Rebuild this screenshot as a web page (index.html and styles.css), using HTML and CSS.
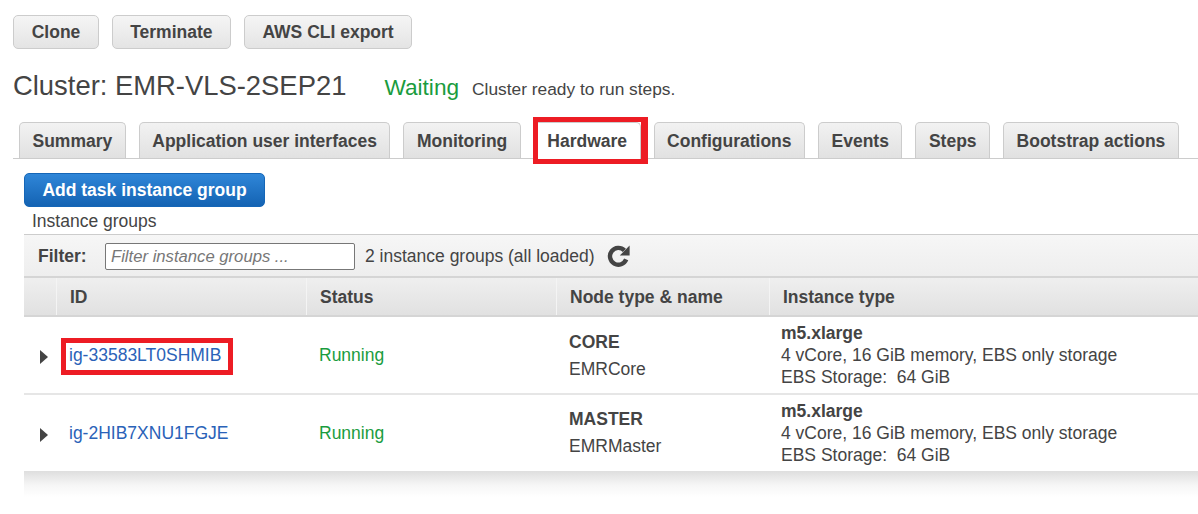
FILE: index.html
```html
<!DOCTYPE html>
<html lang="en">
<head>
<meta charset="utf-8">
<title>Cluster: EMR-VLS-2SEP21</title>
<link rel="stylesheet" href="styles.css">
</head>
<body>
<div class="actions">
  <button class="btn">Clone</button>
  <button class="btn">Terminate</button>
  <button class="btn">AWS CLI export</button>
</div>
<div class="title-row">
  <h1 class="title">Cluster: EMR-VLS-2SEP21</h1>
  <span class="state">Waiting</span>
  <span class="state-note">Cluster ready to run steps.</span>
</div>
<div class="tabs">
  <a class="tab">Summary</a>
  <a class="tab">Application user interfaces</a>
  <a class="tab">Monitoring</a>
  <a class="tab tab-active">Hardware<span class="mark mark-tab"></span></a>
  <a class="tab">Configurations</a>
  <a class="tab">Events</a>
  <a class="tab">Steps</a>
  <a class="tab">Bootstrap actions</a>
</div>
<div class="content">
  <button class="btn-primary">Add task instance group</button>
  <div class="section-label">Instance groups</div>
  <div class="panel">
    <div class="filter-bar">
      <label class="filter-label">Filter:</label>
      <input class="filter-input" type="text" placeholder="Filter instance groups ...">
      <span class="filter-count">2 instance groups (all loaded)</span>
      <svg class="refresh" viewBox="0 0 24 24" width="24" height="24" aria-hidden="true">
        <path d="M19.2 15.4A8.4 8.4 0 1 1 17.4 6.4" fill="none" stroke="#444" stroke-width="4.4"/>
        <path d="M22.6 1.6V11.4h-9.8z" fill="#444"/>
      </svg>
    </div>
    <div class="grid header">
      <div class="cell-head"></div>
      <div class="cell-head">ID</div>
      <div class="cell-head">Status</div>
      <div class="cell-head">Node type &amp; name</div>
      <div class="cell-head">Instance type</div>
    </div>
    <div class="grid row">
      <div class="cell-exp"><span class="arrow"></span></div>
      <div class="cell-id"><a class="link">ig-33583LT0SHMIB<span class="mark mark-id"></span></a></div>
      <div class="cell-status">Running</div>
      <div class="cell-node"><strong>CORE</strong><span>EMRCore</span></div>
      <div class="cell-type"><strong>m5.xlarge</strong><span>4 vCore, 16 GiB memory, EBS only storage</span><span>EBS Storage:&nbsp;&nbsp;64 GiB</span></div>
    </div>
    <div class="grid row row-last">
      <div class="cell-exp"><span class="arrow"></span></div>
      <div class="cell-id"><a class="link">ig-2HIB7XNU1FGJE</a></div>
      <div class="cell-status">Running</div>
      <div class="cell-node"><strong>MASTER</strong><span>EMRMaster</span></div>
      <div class="cell-type"><strong>m5.xlarge</strong><span>4 vCore, 16 GiB memory, EBS only storage</span><span>EBS Storage:&nbsp;&nbsp;64 GiB</span></div>
    </div>
  </div>
  <div class="panel-shadow"></div>
</div>
</body>
</html>
```

FILE: styles.css
```css
* { box-sizing: border-box; }
html, body { margin: 0; padding: 0; }
body {
  width: 1198px;
  height: 514px;
  overflow: hidden;
  background: #fff;
  color: #444;
  font: 17.5px/20px "Liberation Sans", Arial, sans-serif;
}
.actions { display: flex; gap: 12.5px; padding: 15px 0 0 13px; }
.btn {
  height: 34px;
  padding: 0 17.7px;
  border: 1px solid #ccc;
  border-radius: 5px;
  background: linear-gradient(#f5f5f5, #e4e4e4);
  color: #444;
  font: bold 17.5px/20px "Liberation Sans", Arial, sans-serif;
}
.title-row { display: flex; align-items: baseline; padding: 20px 0 0 13px; height: 73px; }
.title { margin: 0; font-size: 27.4px; font-weight: normal; line-height: 34px; }
.state { margin-left: 38px; font-size: 22.67px; color: #1a9c3e; }
.state-note { margin-left: 13px; font-size: 17.33px; }
.tabs {
  display: flex;
  gap: 13px;
  height: 37px;
  margin-left: 13px;
  padding-left: 6px;
  border-bottom: 1px solid #ccc;
}
.tab {
  position: relative;
  height: 36px;
  padding: 8px 12.5px 0;
  border: 1px solid #ccc;
  border-bottom: 0;
  border-radius: 5px 5px 0 0;
  background: linear-gradient(#f2f2f2, #e1e1e1);
  font-weight: bold;
  white-space: nowrap;
}
.tab-active { background: #fff; height: 37px; }
.mark { position: absolute; border: 5px solid #ed1c24; pointer-events: none; }
.mark-tab { left: -2px; right: -8px; top: -6px; height: 47px; border-right-width: 7px; }
.content { padding: 14px 0 0 24px; }
.btn-primary {
  display: block;
  width: 241px;
  height: 34px;
  padding: 0;
  border: 1px solid #1566b7;
  border-radius: 5px;
  background: linear-gradient(#2f86d8, #1463b3);
  color: #fff;
  font: bold 17.5px/20px "Liberation Sans", Arial, sans-serif;
}
.section-label { padding: 4px 0 0 8px; height: 27px; line-height: 20px; }
.filter-bar {
  display: flex;
  align-items: center;
  height: 44px;
  padding: 0 0 0 14px;
  border-top: 1px solid #ccc;
  border-bottom: 2px solid #d5d5d5;
  background: linear-gradient(#f6f6f6, #eee);
}
.filter-label { font-weight: bold; width: 67px; }
.filter-input {
  width: 250px;
  height: 27px;
  margin-top: 2px;
  padding: 0 5px;
  border: 1px solid #777;
  border-radius: 2px;
  background: #fff;
  font: italic 16.67px "Liberation Sans", Arial, sans-serif;
}
.filter-input::placeholder { color: #777; opacity: 1; }
.filter-count { margin-left: 10px; }
.refresh { margin-left: 12px; }
.grid { display: grid; grid-template-columns: 32px 250px 250px 213px 1fr; }
.header { height: 39px; border-bottom: 2px solid #d5d5d5; background: linear-gradient(#efefef, #e1e1e1); }
.cell-head {
  padding: 9px 0 0 13px;
  font-weight: bold;
  border-left: 1px solid #f4f4f4;
}
.cell-head:first-child { border-left: 0; }
.row { height: 78px; background: #fff; border-bottom: 2px solid #e6e6e6; }
.row-last { height: 76px; border-bottom: 0; }
.cell-exp { display: flex; align-items: center; padding: 3px 0 0 16px; }
.arrow { width: 0; height: 0; border-style: solid; border-width: 7px 0 7px 8px; border-color: transparent transparent transparent #444; }
.cell-id, .cell-status { display: flex; align-items: center; padding-left: 13px; }
.link { position: relative; color: #2a62b8; }
.mark-id { left: -8px; top: -7px; width: 172px; height: 37px; }
.cell-status { color: #1a9c3e; }
.cell-node { display: flex; flex-direction: column; gap: 7px; padding: 15px 0 0 13px; }
.row-last .cell-node { padding-top: 14px; }
.cell-type { display: flex; flex-direction: column; padding: 5px 0 0 12px; line-height: 22px; }
.panel-shadow { height: 26px; background: linear-gradient(#dedede, #f6f6f6 55%, #fff); }
```
